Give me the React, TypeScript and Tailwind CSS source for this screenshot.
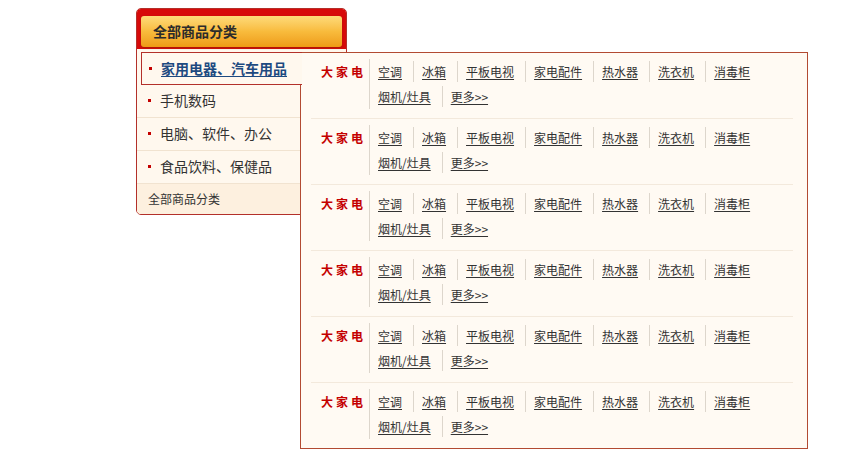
import * as React from "react";

const categories = [
  { name: "家用电器、汽车用品", active: true },
  { name: "手机数码", active: false },
  { name: "电脑、软件、办公", active: false },
  { name: "食品饮料、保健品", active: false },
];

const firstLine = ["空调", "冰箱", "平板电视", "家电配件", "热水器", "洗衣机", "消毒柜"];
const secondLine = ["烟机/灶具", "更多>>"];

function LinkLine({ items }: { items: string[] }) {
  return (
    <div className="flex h-[25px] items-center -ml-px">
      {items.map((item, i) => (
        <a
          key={i}
          href="#"
          className="h-[21px] leading-[21px] border-l border-[#ddd6cc] pl-[8px] pr-[11px] text-[12px] text-[#333] underline underline-offset-2 whitespace-nowrap"
        >
          {item}
        </a>
      ))}
    </div>
  );
}

function Group({ last }: { last: boolean }) {
  return (
    <div
      className={`flex ml-[10px] mr-[14px] pt-[6px] pb-[9px] ${last ? "" : "border-b border-[#f3e9dc]"}`}
    >
      <div className="w-[58px] pl-[10px] h-[25px] leading-[25px] text-[12px] font-bold text-[#c40000] tracking-[3px]">
        大家电
      </div>
      <div className="flex-1 h-[50px] border-l border-[#ddd6cc]">
        <LinkLine items={firstLine} />
        <LinkLine items={secondLine} />
      </div>
    </div>
  );
}

export default function App() {
  return (
    <div
      className="w-[866px] h-[469px] bg-white"
      style={{ fontFamily: '"Noto Sans CJK SC", "Noto Sans", sans-serif' }}
    >
      <div className="relative ml-[136px] pt-[8px] w-[211px]">
        <div className="rounded-[5px] border border-[#b3302a] overflow-hidden bg-[#fff8ee]">
          <div className="bg-[#d70a0a] pt-[7px] px-[4px] pb-[2px]">
            <div className="h-[31px] rounded-[3px] bg-gradient-to-b from-[#fedb78] via-[#f8bb3c] to-[#ee9b14] shadow-[0_1px_2px_rgba(120,40,0,0.5)] pl-[12px] flex items-center text-[14px] font-bold text-[#2b2b2b]">
              全部商品分类
            </div>
          </div>
          <div className="pt-[3px]">
            {categories.map((c, i) =>
              c.active ? (
                <div
                  key={i}
                  className="relative z-10 ml-[4px] w-[161px] h-[33px] border border-r-0 border-[#b3302a] bg-[#fff8ee] flex items-center pl-[7px] pb-[1px]"
                >
                  <span className="w-[3px] h-[3px] bg-[#c40000] mr-[9px]"></span>
                  <a href="#" className="text-[14px] font-bold text-[#1d4a80] underline underline-offset-2">
                    {c.name}
                  </a>
                </div>
              ) : (
                <div
                  key={i}
                  className="h-[33px] border-b border-[#f1e3d0] flex items-center pl-[11px] pb-[1px]"
                >
                  <span className="w-[3px] h-[3px] bg-[#c40000] mr-[9px]"></span>
                  <span className="text-[14px] text-[#333]">{c.name}</span>
                </div>
              )
            )}
            <div className="h-[30px] bg-[#fdf0df] flex items-center pl-[11px] text-[12px] text-[#333]">
              全部商品分类
            </div>
          </div>
        </div>

        <div className="absolute left-[164px] top-[52px] w-[508px] h-[397px] border border-[#b24a32] bg-[#fffaf3]">
          {Array.from({ length: 6 }).map((_, i) => (
            <Group key={i} last={i === 5} />
          ))}
        </div>
      </div>
    </div>
  );
}
